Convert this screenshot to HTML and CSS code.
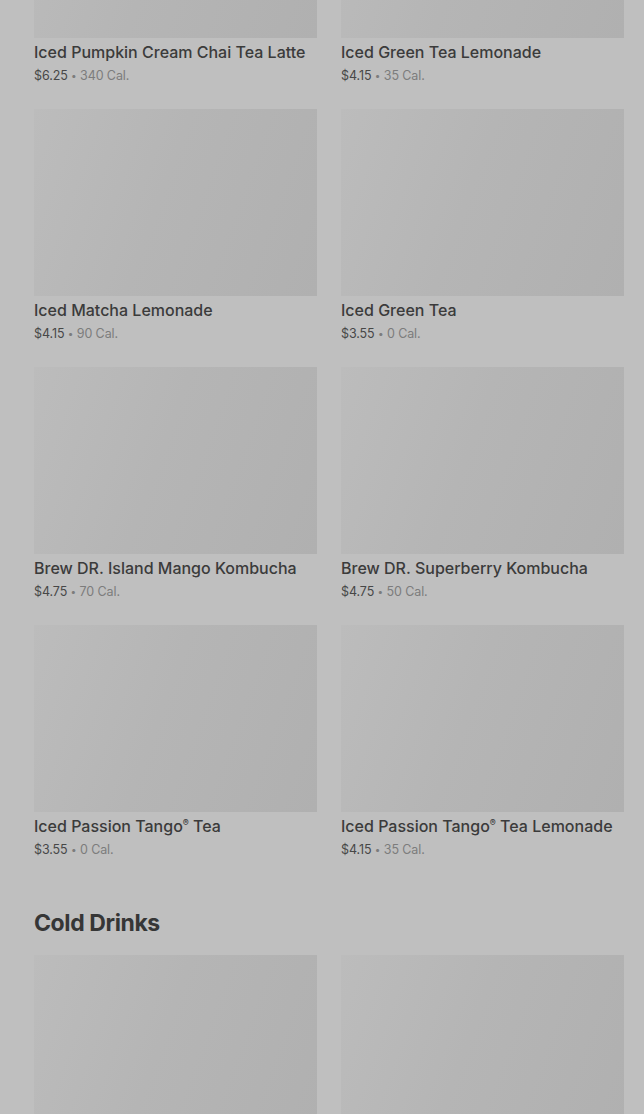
FILE: index.html
```html
<!DOCTYPE html>
<html lang="en">
<head>
    <meta charset="UTF-8">
    <meta name="viewport" content="width=device-width, initial-scale=1.0">
    <title>Menu</title>
    <link rel="stylesheet" href="styles.css">
</head>
<body>
    <div class="menu">
        <div class="grid">
            <div class="item">
                <div class="photo"></div>
                <div class="name">Iced Pumpkin Cream Chai Tea Latte</div>
                <div class="meta"><span class="price">$6.25</span> <span class="dot">•</span> 340 Cal.</div>
            </div>
            <div class="item">
                <div class="photo"></div>
                <div class="name">Iced Green Tea Lemonade</div>
                <div class="meta"><span class="price">$4.15</span> <span class="dot">•</span> 35 Cal.</div>
            </div>
            <div class="item">
                <div class="photo"></div>
                <div class="name">Iced Matcha Lemonade</div>
                <div class="meta"><span class="price">$4.15</span> <span class="dot">•</span> 90 Cal.</div>
            </div>
            <div class="item">
                <div class="photo"></div>
                <div class="name">Iced Green Tea</div>
                <div class="meta"><span class="price">$3.55</span> <span class="dot">•</span> 0 Cal.</div>
            </div>
            <div class="item">
                <div class="photo"></div>
                <div class="name">Brew DR. Island Mango Kombucha</div>
                <div class="meta"><span class="price">$4.75</span> <span class="dot">•</span> 70 Cal.</div>
            </div>
            <div class="item">
                <div class="photo"></div>
                <div class="name">Brew DR. Superberry Kombucha</div>
                <div class="meta"><span class="price">$4.75</span> <span class="dot">•</span> 50 Cal.</div>
            </div>
            <div class="item">
                <div class="photo"></div>
                <div class="name">Iced Passion Tango<sup class="reg">®</sup> Tea</div>
                <div class="meta"><span class="price">$3.55</span> <span class="dot">•</span> 0 Cal.</div>
            </div>
            <div class="item">
                <div class="photo"></div>
                <div class="name">Iced Passion Tango<sup class="reg">®</sup> Tea Lemonade</div>
                <div class="meta"><span class="price">$4.15</span> <span class="dot">•</span> 35 Cal.</div>
            </div>
        </div>

        <h2 class="section-title">Cold Drinks</h2>
        <div class="grid">
            <div class="item">
                <div class="photo"></div>
            </div>
            <div class="item">
                <div class="photo"></div>
            </div>
        </div>
    </div>
</body>
</html>
```

FILE: styles.css
```css
body {
    margin: 0;
    font-family: Inter, "Noto Sans", sans-serif;
    background-color: #bfbfbf;
    overflow: hidden;
}

.menu {
    margin-top: -149px;
    padding: 0 20px 0 34px;
}

.grid {
    display: grid;
    grid-template-columns: 283px 283px;
    column-gap: 24px;
    row-gap: 24px;
}

.photo {
    height: 187px;
    background: linear-gradient(110deg, #bcbcbc 0%, #b5b5b5 45%, #b0b0b0 100%);
}

.name {
    margin-top: 4px;
    height: 20px;
    font-size: 16px;
    line-height: 20px;
    font-weight: 500;
    color: #3b3b3b;
    white-space: nowrap;
}

.reg {
    font-size: 9px;
    line-height: 0;
    vertical-align: 6px;
}

.meta {
    margin-top: 5px;
    height: 18px;
    font-size: 12.5px;
    line-height: 18px;
    letter-spacing: -0.1px;
    color: #7c7c7c;
}

.price {
    color: #474747;
}

.dot {
    font-size: 10px;
    line-height: 0;
    vertical-align: 1px;
}

.section-title {
    margin: 50px 0 18px;
    font-size: 23px;
    line-height: 28px;
    font-weight: 700;
    letter-spacing: -0.4px;
    color: #363636;
}
```
